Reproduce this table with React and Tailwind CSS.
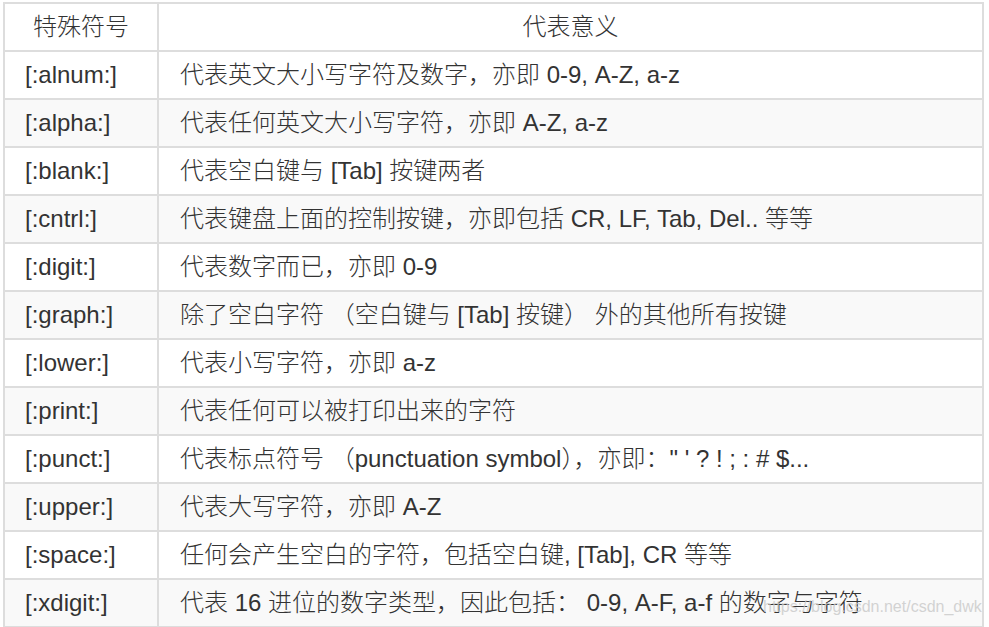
import React from "react";

const rows = [
  ["[:alnum:]", "代表英文大小写字符及数字，亦即 0-9, A-Z, a-z"],
  ["[:alpha:]", "代表任何英文大小写字符，亦即 A-Z, a-z"],
  ["[:blank:]", "代表空白键与 [Tab] 按键两者"],
  ["[:cntrl:]", "代表键盘上面的控制按键，亦即包括 CR, LF, Tab, Del.. 等等"],
  ["[:digit:]", "代表数字而已，亦即 0-9"],
  ["[:graph:]", "除了空白字符 （空白键与 [Tab] 按键） 外的其他所有按键"],
  ["[:lower:]", "代表小写字符，亦即 a-z"],
  ["[:print:]", "代表任何可以被打印出来的字符"],
  ["[:punct:]", "代表标点符号 （punctuation symbol），亦即：\" ' ? ! ; : # $..."],
  ["[:upper:]", "代表大写字符，亦即 A-Z"],
  ["[:space:]", "任何会产生空白的字符，包括空白键, [Tab], CR 等等"],
  ["[:xdigit:]", "代表 16 进位的数字类型，因此包括： 0-9, A-F, a-f 的数字与字符"],
];

export default function App() {
  return (
    <div
      className="relative w-[989px] h-[627px] bg-white pt-[2px] pl-[3px] text-[#333] text-[24px] leading-none"
      style={{ fontFamily: '"Liberation Sans", "Noto Sans CJK SC", sans-serif' }}
    >
      <div className="w-[981px] grid grid-cols-[152px_1fr] gap-[2px] bg-[#dddddd] p-[2px] auto-rows-[46px]">
        <div className="bg-white flex items-center justify-center font-light">特殊符号</div>
        <div className="bg-white flex items-center justify-center font-light">代表意义</div>
        {rows.map(([k, v], i) => (
          <React.Fragment key={k}>
            <div className={`${i % 2 === 1 ? "bg-[#f9f9f9]" : "bg-white"} flex items-center pl-[20px]`}>{k}</div>
            <div className={`${i % 2 === 1 ? "bg-[#f9f9f9]" : "bg-white"} flex items-center pl-[21px] font-light whitespace-pre`}>{v}</div>
          </React.Fragment>
        ))}
      </div>
      <div className="absolute left-[763px] top-[599px] text-[16px] text-[#c8c8c8]/80 font-normal">
        https://blog.csdn.net/csdn_dwk
      </div>
    </div>
  );
}
